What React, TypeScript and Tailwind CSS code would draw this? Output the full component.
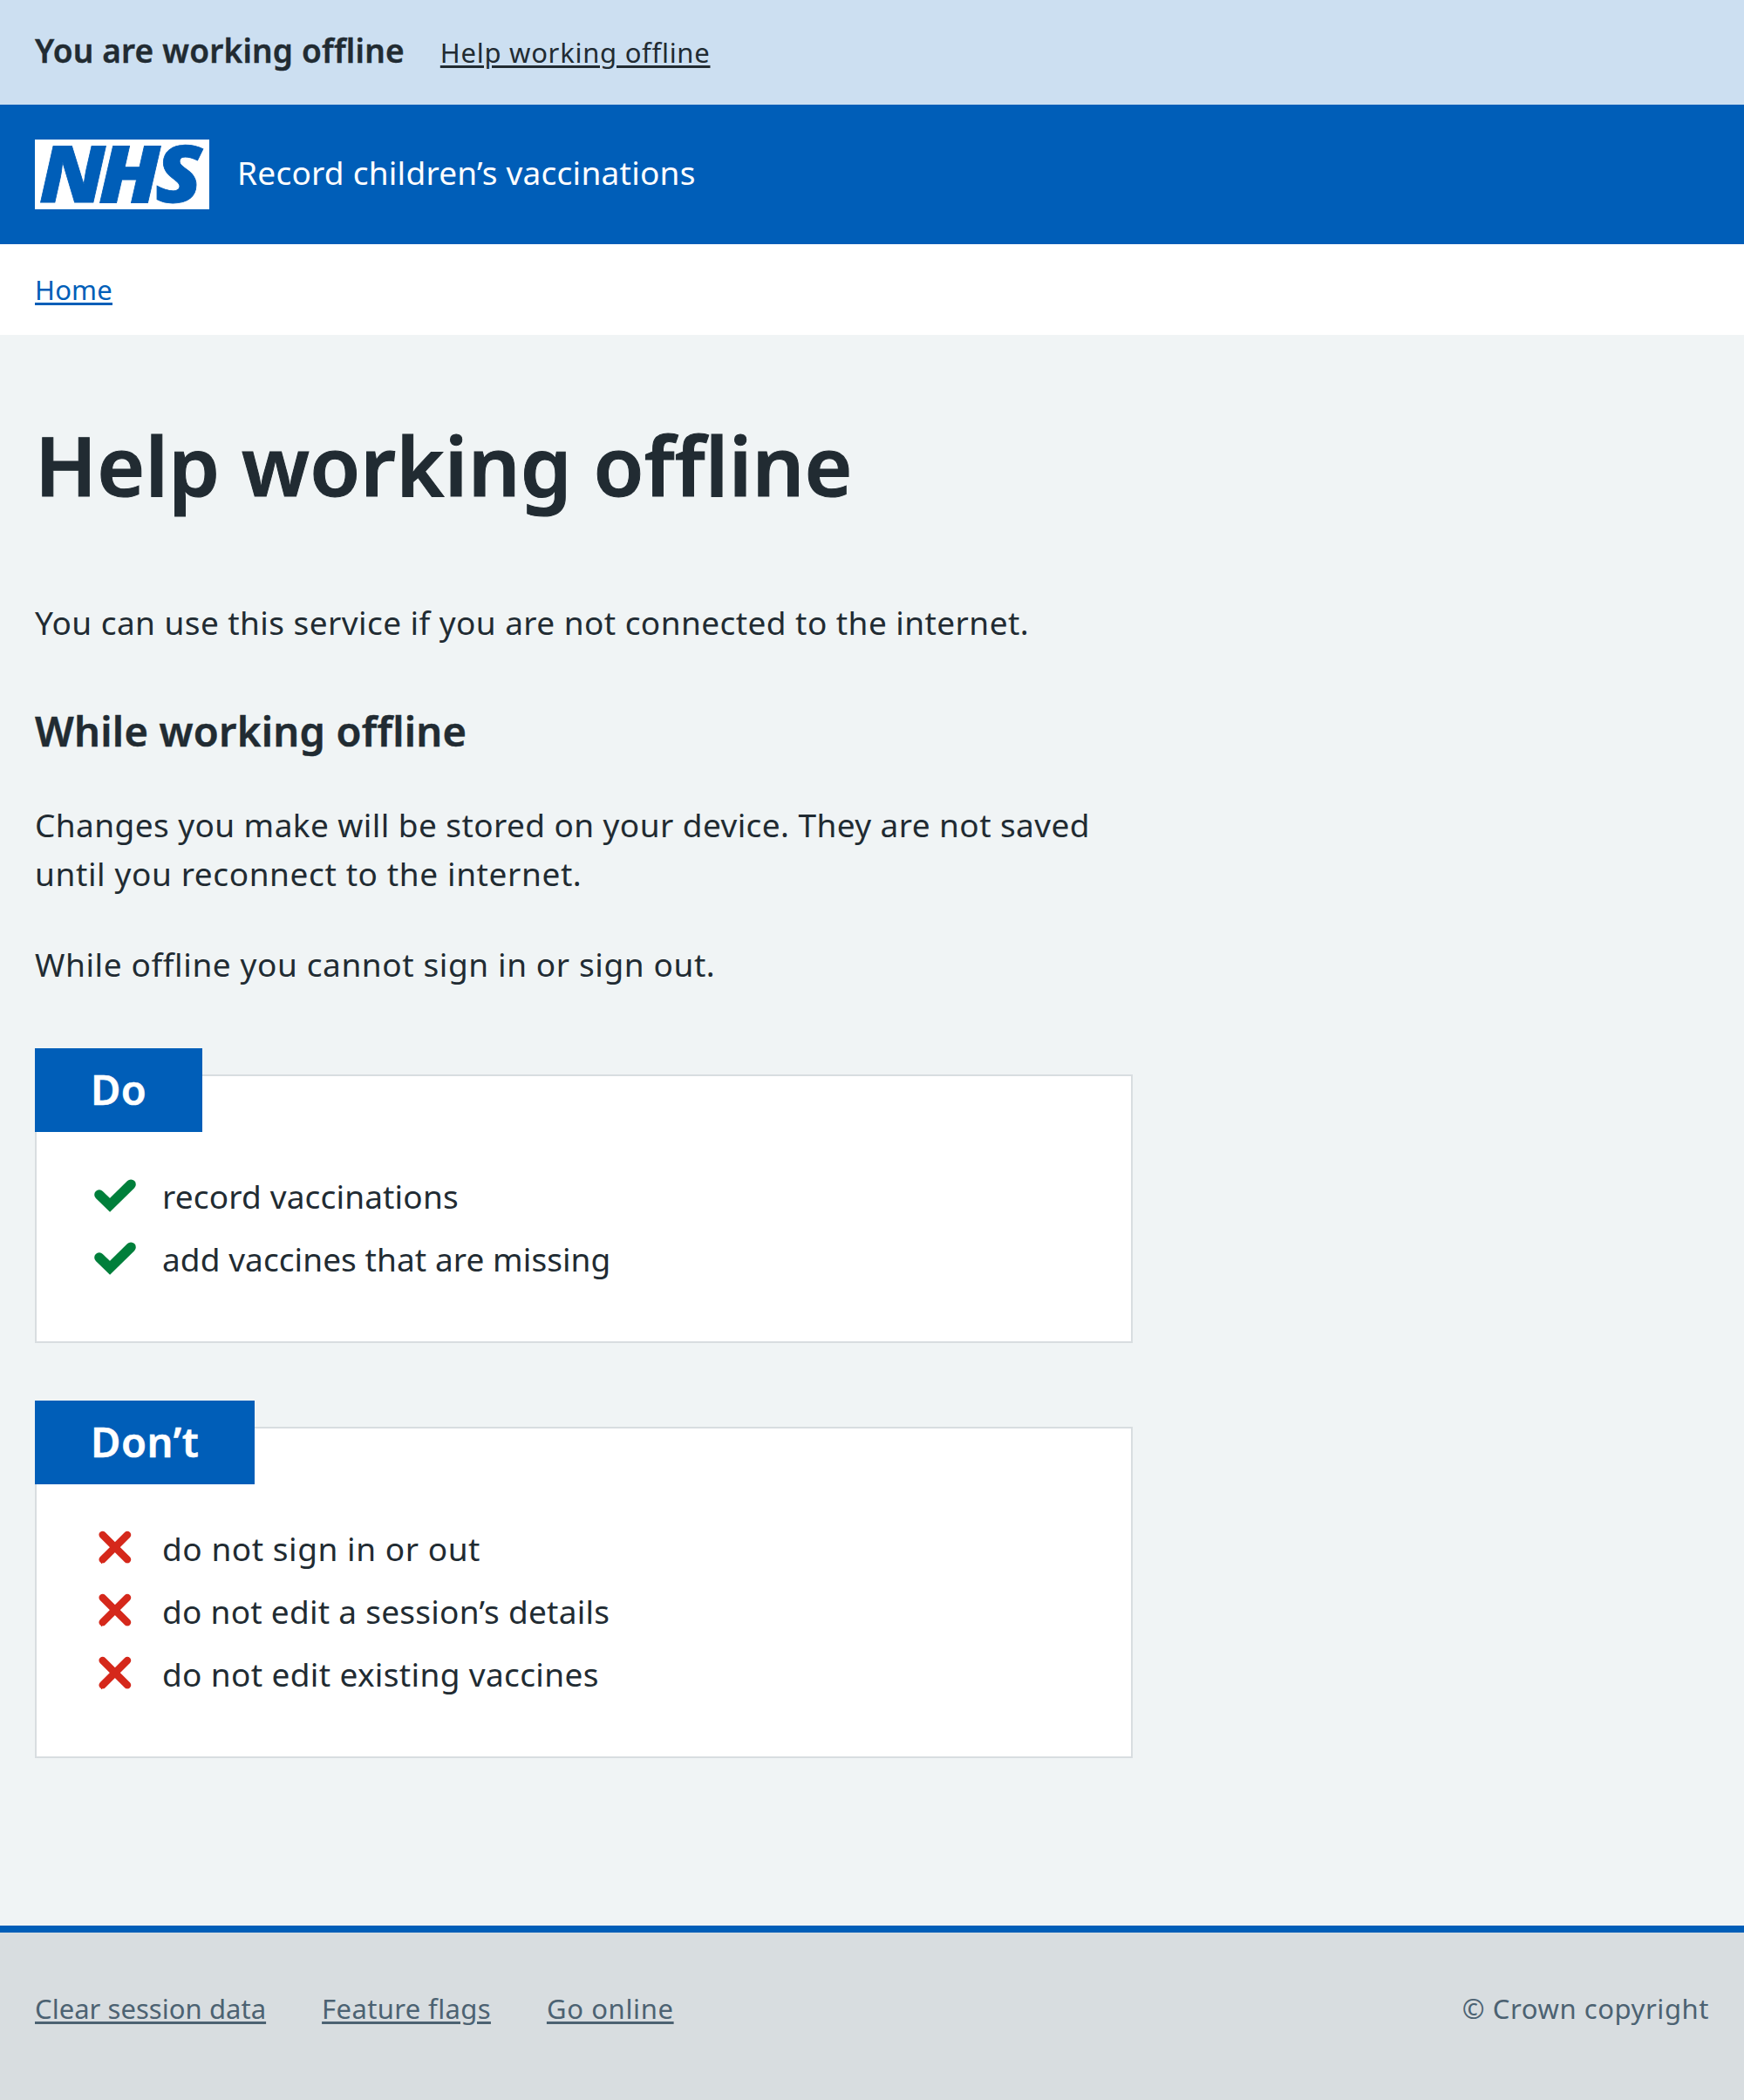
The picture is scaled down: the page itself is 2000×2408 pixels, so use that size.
import type { ReactNode } from "react";

function NhsLogo() {
  return (
    <svg className="h-[80px] w-[200px] shrink-0 overflow-visible" viewBox="0 0 200 80" role="img" aria-label="NHS">
      <rect width="200" height="80" fill="#fff" />
      <g
        className="font-['Noto_Sans'] font-black italic"
        fill="#005eb8"
        stroke="#005eb8"
        strokeWidth="0.8"
        fontSize="90"
      >
        <text x="5" y="72.1" textLength="76" lengthAdjust="spacingAndGlyphs">N</text>
        <text x="73" y="72.1" textLength="71" lengthAdjust="spacingAndGlyphs">H</text>
        <text x="138" y="72.1" textLength="54" lengthAdjust="spacingAndGlyphs">S</text>
      </g>
    </svg>
  );
}

function TickIcon() {
  return (
    <svg className="-my-[7px] size-[68px] shrink-0" viewBox="0 0 24 24" fill="none" aria-hidden="true">
      <path d="M18.4 7.8l-8.5 8.4L5.6 12" stroke="#007f3b" strokeWidth="4" strokeLinecap="round" />
    </svg>
  );
}

function CrossIcon() {
  return (
    <svg className="-my-[7px] size-[68px] shrink-0" viewBox="0 0 24 24" fill="#d5281b" aria-hidden="true">
      <path d="M17 18.5c-.4 0-.8-.1-1.1-.4l-10-10c-.6-.6-.6-1.6 0-2.1.6-.6 1.5-.6 2.1 0l10 10c.6.6.6 1.5 0 2.1-.3.3-.6.4-1 .4z" />
      <path d="M7 18.5c-.4 0-.8-.1-1.1-.4-.6-.6-.6-1.5 0-2.1l10-10c.6-.6 1.5-.6 2.1 0 .6.6.6 1.5 0 2.1l-10 10c-.3.3-.6.4-1 .4z" />
    </svg>
  );
}

function CareCard({ title, children }: { title: ReactNode; children: ReactNode }) {
  return (
    <section className="w-[1259px] border-2 border-[#d8dde0] bg-white pb-[67px]">
      <h3 className="-mt-8 -ml-0.5 w-fit bg-[#005eb8] px-16 pt-[15px] pb-[17px] text-[47px] leading-[64px] font-semibold text-white [-webkit-text-stroke:0.5px]">
        {title}
      </h3>
      <ul className="mt-[45px] flex flex-col gap-4 pl-14">{children}</ul>
    </section>
  );
}

function CareItem({ icon, className, children }: { icon: ReactNode; className: string; children: ReactNode }) {
  return (
    <li className="flex h-14 gap-5">
      {icon}
      <span className={`mt-px ${className}`}>{children}</span>
    </li>
  );
}

const link = "underline decoration-[3px] underline-offset-[3px]";

export default function App() {
  return (
    <div className="flex min-h-[2408px] flex-col bg-[#f0f4f5] font-['Noto_Sans','Open_Sans',sans-serif] text-[37px] leading-[56px] text-[#212b32]">
      <div className="flex h-[120px] items-baseline gap-[41px] bg-[#ccdff1] px-10 pt-[30px]">
        <strong className="font-semibold tracking-[0.19px] [-webkit-text-stroke:0.4px]">You are working offline</strong>
        <a href="#help" className={`${link} text-[31px] tracking-[0.73px]`}>Help working offline</a>
      </div>

      <header className="flex h-[160px] items-center gap-8 bg-[#005eb8] px-10 text-white">
        <NhsLogo />
        <span className="pb-1 tracking-[0.25px]">Record children’s vaccinations</span>
      </header>

      <nav className="h-[104px] bg-white px-10 pt-7 text-[31px] leading-[48px] text-[#005eb8]">
        <a href="#home" className={`${link} tracking-[0.19px]`}>Home</a>
      </nav>

      <main className="grow px-10 pt-[97px]">
        <h1 className="text-[94px] leading-[104px] font-semibold tracking-[0.2px] [-webkit-text-stroke:1px]">Help working offline</h1>
        <p className="mt-[101px] tracking-[0.435px]">You can use this service if you are not connected to the internet.</p>
        <h2 className="mt-16 text-[47px] leading-[64px] font-semibold tracking-[0.25px] [-webkit-text-stroke:0.5px]">While working offline</h2>
        <p className="mt-12">
          <span className="tracking-[0.42px]">Changes you make will be stored on your device. They are not saved</span>
          <br />
          <span className="tracking-[0.61px]">until you reconnect to the internet.</span>
        </p>
        <p className="mt-12 tracking-[0.6px]">While offline you cannot sign in or sign out.</p>

        <div className="mt-[98px] flex flex-col gap-24">
          <CareCard title={<span className="tracking-[0.3px]">Do</span>}>
            <CareItem icon={<TickIcon />} className="tracking-[0.17px]">record vaccinations</CareItem>
            <CareItem icon={<TickIcon />} className="tracking-[0.08px]">add vaccines that are missing</CareItem>
          </CareCard>
          <CareCard title={<span className="tracking-[0.6px]">Don’t</span>}>
            <CareItem icon={<CrossIcon />} className="tracking-[0.55px]">do not sign in or out</CareItem>
            <CareItem icon={<CrossIcon />} className="tracking-[0.26px]">do not edit a session’s details</CareItem>
            <CareItem icon={<CrossIcon />} className="tracking-[0.36px]">do not edit existing vaccines</CareItem>
          </CareCard>
        </div>
      </main>

      <footer className="flex h-[200px] justify-between border-t-8 border-[#005eb8] bg-[#d8dde0] px-10 pt-[63px] text-[31px] leading-[48px] text-[#4c6272]">
        <div className="flex gap-16">
          <a href="#clear" className={`${link} h-12 tracking-[0.04px]`}>Clear session data</a>
          <a href="#flags" className={`${link} h-12 tracking-[0.37px]`}>Feature flags</a>
          <a href="#online" className={`${link} h-12 tracking-[0.64px]`}>Go online</a>
        </div>
        <p className="tracking-[0.57px]">© Crown copyright</p>
      </footer>
    </div>
  );
}
